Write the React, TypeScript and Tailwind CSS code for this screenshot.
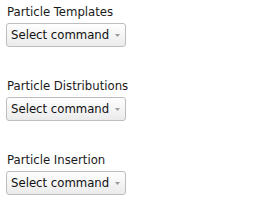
import React from "react";

const groups = ["Particle Templates", "Particle Distributions", "Particle Insertion"];

function CommandSelect() {
  return (
    <button
      type="button"
      className="flex h-[24px] w-[120px] items-center justify-between whitespace-nowrap rounded-[3px] border border-[#bdbdbd] bg-gradient-to-b from-[#fefefe] to-[#ebebeb] pl-[4px] pr-[5px] text-[13px] leading-[16px] text-[#111]"
    >
      <span>Select command</span>
      <svg width="5" height="3" viewBox="0 0 5 3">
        <path d="M0 0h5L2.5 3z" fill="#999" />
      </svg>
    </button>
  );
}

export default function App() {
  return (
    <div
      className="flex flex-col gap-[31px] bg-white px-[6px] pt-[4px]"
      style={{ fontFamily: '"DejaVu Sans Condensed", "DejaVu Sans", sans-serif' }}
    >
      {groups.map((g) => (
        <div key={g} className="flex flex-col gap-[3px]">
          <div className="whitespace-nowrap pl-[1px] text-[13px] leading-[16px] text-[#1a1a1a]">{g}</div>
          <CommandSelect />
        </div>
      ))}
    </div>
  );
}
